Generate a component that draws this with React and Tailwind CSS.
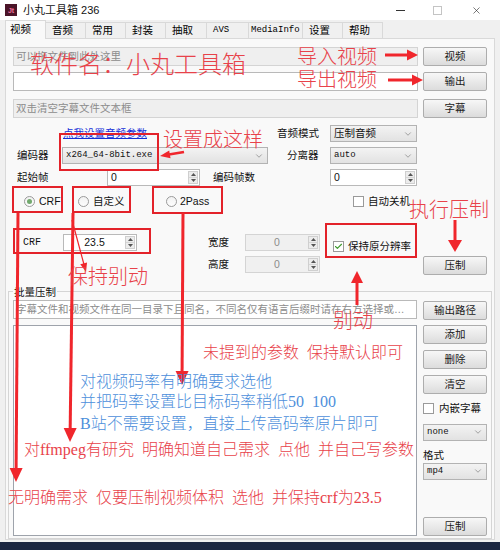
import { ChevronDown, Check, X } from "lucide-react";

const ui = "font-['Liberation_Sans','Noto_Sans_CJK_SC',sans-serif]";
const mono = "font-['Liberation_Mono','Noto_Sans_CJK_SC',monospace]";
const note = "font-['Liberation_Serif','Noto_Sans_CJK_SC',serif]";

const Btn = ({ children, className = "" }) => (
  <div
    className={`flex h-[19px] w-[64px] shrink-0 items-center justify-center rounded-[2px] border border-[#adadad] bg-linear-to-b from-[#f7f7f7] to-[#dcdcdc] text-[10.5px] text-[#1a1a1a] ${className}`}
  >
    {children}
  </div>
);

const Field = ({ text, gray, className = "" }) => (
  <div
    className={`flex h-[19px] shrink-0 items-center border px-[2px] text-[10.5px] text-[#8c8c8c] ${
      gray ? "border-[#d4d4d4] bg-[#efefef]" : "border-[#b9b9b9] bg-white"
    } ${className}`}
  >
    <span className="truncate">{text}</span>
  </div>
);

const Select = ({ value, className = "", textClass = "text-[10.5px]" }) => (
  <div
    className={`flex h-[17px] shrink-0 items-center justify-between border border-[#b3b3b3] bg-linear-to-b from-[#f3f3f3] to-[#e2e2e2] pl-[3px] pr-[3px] text-[#111] ${className}`}
  >
    <span className={textClass}>{value}</span>
    <ChevronDown size={10} strokeWidth={1.4} className="text-[#6b6b6b]" />
  </div>
);

const Spin = ({ value, className = "", textClass = "text-left", disabled }) => (
  <div
    className={`flex h-[17px] shrink-0 items-stretch border ${
      disabled ? "border-[#d4d4d4] bg-[#f0f0f0] text-[#8c8c8c]" : "border-[#b9b9b9] bg-white text-[#111]"
    } ${className}`}
  >
    <div className={`flex-1 px-[3px] text-[10.5px] leading-[15px] ${textClass}`}>{value}</div>
    <div className="my-[1px] mr-[1px] flex w-[10px] flex-col border border-[#cfcfcf] bg-[#ececec]">
      <div className="flex flex-1 items-center justify-center border-b border-[#d6d6d6]">
        <svg width="5" height="3" viewBox="0 0 5 3">
          <path d="M0 3L2.5 0L5 3Z" fill="#555" />
        </svg>
      </div>
      <div className="flex flex-1 items-center justify-center">
        <svg width="5" height="3" viewBox="0 0 5 3">
          <path d="M0 0L2.5 3L5 0Z" fill="#555" />
        </svg>
      </div>
    </div>
  </div>
);

const Radio = ({ on }) => (
  <div className="flex h-[11px] w-[11px] shrink-0 items-center justify-center rounded-full border border-[#9a9a9a] bg-linear-to-b from-[#f2f2f2] to-[#fdfdfd]">
    {on && <div className="h-[5px] w-[5px] rounded-full bg-[#72a96e]" />}
  </div>
);

const Box = ({ on }) => (
  <div className="flex h-[11px] w-[11px] shrink-0 items-center justify-center border border-[#9a9a9a] bg-white">
    {on && <Check size={11} strokeWidth={3} className="text-[#3f9b2f]" />}
  </div>
);

const tabs = [
  { t: "音频", w: "w-[41px]" },
  { t: "常用", w: "w-[41px]" },
  { t: "封装", w: "w-[41px]" },
  { t: "抽取", w: "w-[42px]" },
  { t: "AVS", w: "w-[43px] pl-[6px]", m: true },
  { t: "MediaInfo", w: "w-[55px] pl-[2px]", m: true },
  { t: "设置", w: "w-[41px]" },
  { t: "帮助", w: "w-[41px]" },
];

const Arrow = ({ x1, y1, x2, y2, w = 3, hw = 5.5, hl = 11 }) => {
  const dx = x2 - x1;
  const dy = y2 - y1;
  const len = Math.hypot(dx, dy);
  const ux = dx / len;
  const uy = dy / len;
  const bx = x2 - ux * hl;
  const by = y2 - uy * hl;
  const px = -uy;
  const py = ux;
  return (
    <g>
      <line x1={x1} y1={y1} x2={bx + ux} y2={by + uy} stroke="#f0262c" strokeWidth={w} />
      <polygon
        points={`${x2},${y2} ${bx + px * hw},${by + py * hw} ${bx - px * hw},${by - py * hw}`}
        fill="#f0262c"
      />
    </g>
  );
};

const Note = ({ children, className }) => (
  <span className={`absolute whitespace-pre font-light leading-none ${note} ${className}`}>{children}</span>
);

export default function App() {
  return (
    <div className={`relative h-[550px] w-[500px] overflow-hidden bg-[#1b2640] ${ui}`}>
      <div className="flex h-[542px] w-[500px] flex-col bg-[#f0f0f0]">
        {/* title bar */}
        <div className="flex h-[20px] shrink-0 items-center bg-white">
          <div className="ml-[5px] flex h-[12px] w-[12px] items-center justify-center bg-[#4b1428] text-[7px] font-bold leading-none text-[#f2709b]">
            Jt
          </div>
          <span className="ml-[6px] text-[11px] text-[#111]">小丸工具箱 236</span>
          <div className="ml-auto flex items-center">
            <div className="h-px w-[9px] bg-[#333]" />
            <div className="ml-[28px] h-[9px] w-[9px] border border-[#c4c4c4]" />
            <X size={11} strokeWidth={1.3} className="ml-[29px] mr-[18px] text-[#222]" />
          </div>
        </div>

        {/* tabs */}
        <div className="z-10 flex h-[18px] shrink-0 items-end pl-[5px]">
          <div className="-mb-px flex h-[19px] w-[41px] items-center border border-b-0 border-[#d9d9d9] bg-[#f9f9f9] pl-[4px] text-[10.5px]">
            视频
          </div>
          {tabs.map((tab) => (
            <div
              key={tab.t}
              className={`-ml-px flex h-[16px] items-center border border-b-0 border-[#d9d9d9] bg-[#f0f0f0] ${tab.w} ${
                tab.m ? `${mono} text-[9px]` : "pl-[6px] text-[10.5px]"
              }`}
            >
              {tab.t}
            </div>
          ))}
        </div>

        {/* panel */}
        <div className="mx-[5px] flex h-[502px] shrink-0 flex-col border border-[#d9d9d9] bg-[#f9f9f9] text-[10.5px] text-[#111]">
          <div className="mt-[8px] flex pl-[7px]">
            <Field gray text="可以拖文件到此处这里" className="h-[18px] w-[405px]" />
            <Btn className="ml-[5px] h-[18px]">视频</Btn>
          </div>
          <div className="mt-[6px] flex pl-[7px]">
            <Field text="" className="h-[18px] w-[405px]" />
            <Btn className="ml-[5px] h-[18px]">输出</Btn>
          </div>
          <div className="mt-[8px] flex pl-[7px]">
            <Field gray text="双击清空字幕文件文本框" className="h-[18px] w-[405px]" />
            <Btn className="ml-[5px] h-[18px]">字幕</Btn>
          </div>

          <div className="mt-[7px] flex h-[17px] items-center">
            <div className="ml-[57px] w-[214px]">
              <span className="text-[#1530d8] underline">点我设置音频参数</span>
            </div>
            <span className="w-[53px]">音频模式</span>
            <Select value="压制音频" className="w-[87px]" />
          </div>
          <div className="mt-[5px] flex h-[17px] items-center">
            <span className="ml-[11px] w-[45px]">编码器</span>
            <Select value="x264_64-8bit.exe" className="w-[206px]" textClass={`${mono} text-[9px]`} />
            <span className="w-[62px] pl-[19px]">分离器</span>
            <Select value="auto" className="w-[87px]" textClass={`${mono} text-[9px]`} />
          </div>
          <div className="mt-[5px] flex h-[17px] items-center">
            <span className="ml-[11px] w-[90px]">起始帧</span>
            <Spin value="0" className="w-[93px]" />
            <span className="w-[130px] pl-[13px]">编码帧数</span>
            <Spin value="0" className="w-[87px]" />
          </div>

          <div className="mt-[8px] flex h-[16px] items-center">
            <div className="ml-[18px] flex w-[54px] items-center">
              <Radio on />
              <span className="ml-[4px]">CRF</span>
            </div>
            <div className="flex w-[88px] items-center">
              <Radio />
              <span className="ml-[4px]">自定义</span>
            </div>
            <div className="flex w-[187px] items-center">
              <Radio />
              <span className="ml-[3px]">2Pass</span>
            </div>
            <div className="flex items-center">
              <Box />
              <span className="ml-[4px]">自动关机</span>
            </div>
          </div>

          <div className="mt-[24px] flex h-[40px] items-start">
            <div className="ml-[17px] flex w-[185px] items-center">
              <span className={`w-[40px] ${mono} text-[10px]`}>CRF</span>
              <Spin value="23.5" className="w-[74px]" textClass="text-center" />
            </div>
            <div className="flex w-[112px] flex-col gap-[5px]">
              <div className="flex h-[17px] items-center">
                <span className="w-[37px]">宽度</span>
                <Spin disabled value="0" className="w-[75px]" textClass="text-center" />
              </div>
              <div className="flex h-[17px] items-center">
                <span className="w-[37px]">高度</span>
                <Spin disabled value="0" className="w-[75px]" textClass="text-center" />
              </div>
            </div>
            <div className="ml-[13px] mt-[5px] flex w-[90px] items-center">
              <Box on />
              <span className="ml-[4px]">保持原分辨率</span>
            </div>
            <Btn className="mt-[22px]">压制</Btn>
          </div>

          <fieldset className="ml-[2px] mt-[12px] flex h-[254px] w-[484px] flex-col border border-[#d5d5d5]">
            <legend className="ml-[4px] px-[1px] text-[10.5px] leading-[12px]">批量压制</legend>
            <div className="mt-[2px] flex items-start">
              <Field
                text="字幕文件和视频文件在同一目录下且同名，不同名仅有语言后缀时请在右方选择或输入"
                className="ml-[4px] w-[404px]"
              />
              <Btn className="ml-[6px] mt-[1px] h-[18px]">输出路径</Btn>
            </div>
            <div className="mt-[5px] flex">
              <div className="ml-[4px] h-[211px] w-[404px] border border-[#9ea3ab] bg-white" />
              <div className="ml-[6px] flex h-[211px] flex-col">
                <Btn>添加</Btn>
                <Btn className="mt-[6px]">删除</Btn>
                <Btn className="mt-[6px]">清空</Btn>
                <div className="mt-[8px] flex h-[13px] items-center">
                  <Box />
                  <span className="ml-[5px]">内嵌字幕</span>
                </div>
                <Select value="none" className="mt-[9px] w-[64px]" textClass={`${mono} text-[9px]`} />
                <span className="mt-[8px] leading-[12px]">格式</span>
                <Select value="mp4" className="mt-[2px] w-[64px]" textClass={`${mono} text-[9px]`} />
                <Btn className="mt-auto">压制</Btn>
              </div>
            </div>
          </fieldset>
        </div>
      </div>

      {/* annotations */}
      <div className="pointer-events-none absolute inset-0">
        <svg width="500" height="550" className="absolute left-0 top-0">
          <g fill="none" stroke="#e3222a" strokeWidth="2">
            <rect x="60" y="134" width="98" height="36" />
            <rect x="13" y="187" width="49" height="25" />
            <rect x="73" y="187" width="57" height="25" />
            <rect x="153" y="187" width="69" height="26" />
            <rect x="14" y="229" width="136" height="24" />
            <rect x="326" y="224" width="90" height="33" />
          </g>
          <Arrow x1={385} y1={55} x2={418} y2={55} />
          <Arrow x1={388} y1={80} x2={423} y2={80} />
          <Arrow x1={184} y1={152} x2={160} y2={156} w={2.5} hw={4} hl={10} />
          <Arrow x1={18} y1={213} x2={16} y2={482} hw={6.5} hl={14} />
          <Arrow x1={73} y1={213} x2={70} y2={442} hw={6.5} hl={14} />
          <Arrow x1={183} y1={213} x2={182} y2={385} hw={6.5} hl={14} />
          <Arrow x1={72} y1={220} x2={86} y2={272} w={1.2} hw={3.5} hl={9} />
          <Arrow x1={455} y1={220} x2={455} y2={252} hw={7} hl={12} />
          <Arrow x1={357} y1={305} x2={357} y2={271} hw={6} hl={12} />
        </svg>
        <Note className="left-[30px] top-[53px] text-[24px] text-[#e8424a]">软件名：小丸工具箱</Note>
        <Note className="left-[297px] top-[47px] text-[20px] text-[#e8424a]">导入视频</Note>
        <Note className="left-[297px] top-[70px] text-[20px] text-[#e8424a]">导出视频</Note>
        <Note className="left-[163px] top-[130px] text-[20px] text-[#e8424a]">设置成这样</Note>
        <Note className="left-[409px] top-[200px] text-[20px] text-[#e8424a]">执行压制</Note>
        <Note className="left-[68px] top-[267px] text-[20px] text-[#e8424a]">保持别动</Note>
        <Note className="left-[333px] top-[311px] text-[20px] text-[#e8424a]">别动</Note>
        <Note className="left-[203px] top-[345px] text-[16px] text-[#e8424a]">未提到的参数  保持默认即可</Note>
        <Note className="left-[80px] top-[374px] text-[16px] text-[#4d8fdb]">对视频码率有明确要求选他</Note>
        <Note className="left-[80px] top-[394px] text-[16px] text-[#4d8fdb]">并把码率设置比目标码率稍低50  100</Note>
        <Note className="left-[80px] top-[416px] text-[16px] text-[#4d8fdb]">B站不需要设置，直接上传高码率原片即可</Note>
        <Note className="left-[24px] top-[442px] text-[16px] text-[#e8424a]">
          对ffmpeg有研究  明确知道自己需求  点他  并自己写参数
        </Note>
        <Note className="left-[8px] top-[490px] text-[16px] text-[#e8424a]">
          无明确需求  仅要压制视频体积  选他  并保持crf为23.5
        </Note>
      </div>
    </div>
  );
}
